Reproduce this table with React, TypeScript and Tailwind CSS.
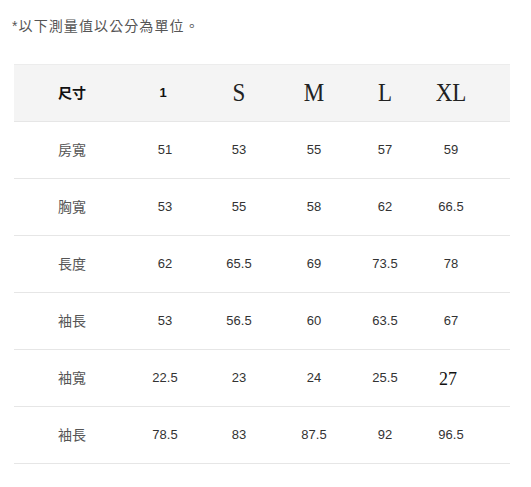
const SIZES = ["1", "S", "M", "L", "XL"];

const ROWS: { label: string; values: string[] }[] = [
  { label: "房寬", values: ["51", "53", "55", "57", "59"] },
  { label: "胸寬", values: ["53", "55", "58", "62", "66.5"] },
  { label: "長度", values: ["62", "65.5", "69", "73.5", "78"] },
  { label: "袖長", values: ["53", "56.5", "60", "63.5", "67"] },
  { label: "袖寬", values: ["22.5", "23", "24", "25.5", "27"] },
  { label: "袖長", values: ["78.5", "83", "87.5", "92", "96.5"] },
];

const grid = "grid grid-cols-[116px_70px_78px_72px_70px_62px_28px] items-center h-[57px]";
const cjk = "font-['Liberation_Sans','Noto_Sans_CJK_TC',sans-serif]";

export default function App() {
  return (
    <div className={`w-[531px] h-[487px] bg-white ${cjk}`}>
      <p className="pt-[18px] pl-[12px] text-[14px] leading-[16px] text-[#555] tracking-[1.1px]">
        *以下測量值以公分為單位。
      </p>

      <div className="mt-[30px] ml-[14px] w-[496px]">
        {/* Header */}
        <div className={`${grid} bg-[#f4f4f4] border-t border-[#ececec]`}>
          <div className="text-center text-[14px] font-bold text-[#111]">尺寸</div>
          {SIZES.map((s) =>
            s === "1" ? (
              <div key={s} className="text-center text-[13px] font-bold text-[#111] pr-[4px]">
                {s}
              </div>
            ) : (
              <div
                key={s}
                className="text-center text-[23px] text-[#222] font-['Liberation_Serif',serif] scale-y-110"
              >
                {s}
              </div>
            )
          )}
          <div />
        </div>

        {/* Body */}
        {ROWS.map((row, i) => (
          <div key={i} className={`${grid} border-t border-[#e6e6e6]`}>
            <div className="text-center text-[14px] text-[#555]">{row.label}</div>
            {row.values.map((v, j) =>
              v === "27" ? (
                <div key={j} className="text-center text-[18px] text-[#111] font-['Liberation_Serif',serif] pt-[2px] pr-[6px]">
                  {v}
                </div>
              ) : (
                <div key={j} className="text-center text-[13px] text-[#333]">
                  {v}
                </div>
              )
            )}
            <div />
          </div>
        ))}
        <div className="border-t border-[#e6e6e6]" />
      </div>
    </div>
  );
}
